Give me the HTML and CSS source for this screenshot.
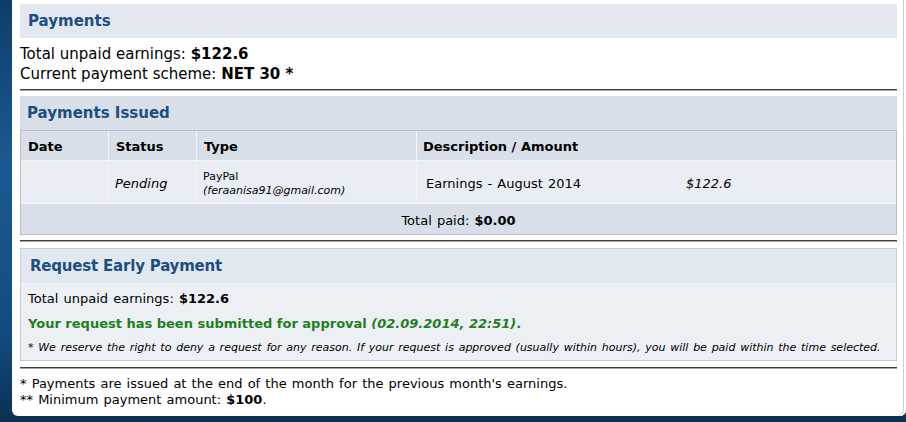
FILE: index.html
```html
<!DOCTYPE html>
<html>
<head>
<meta charset="utf-8">
<title>Payments</title>
<link rel="stylesheet" href="styles.css">
</head>
<body>
<div class="page">
  <h2 class="head">Payments</h2>
  <div class="summary">
    <div>Total unpaid earnings: <b>$122.6</b></div>
    <div>Current payment scheme: <b>NET 30 *</b></div>
  </div>
  <hr class="rule rule-a">

  <section class="issued">
    <h2 class="issued-title">Payments Issued</h2>
    <table class="pay-table">
      <thead>
        <tr>
          <th class="c-date">Date</th>
          <th class="c-status">Status</th>
          <th class="c-type">Type</th>
          <th class="c-desc">Description / Amount</th>
        </tr>
      </thead>
      <tbody>
        <tr class="row">
          <td></td>
          <td><i>Pending</i></td>
          <td class="type-cell">PayPal<br><i>(feraanisa91@gmail.com)</i></td>
          <td class="desc-cell"><span class="desc">Earnings - August 2014</span><i class="amt">$122.6</i></td>
        </tr>
        <tr class="total">
          <td colspan="4">Total paid: <b>$0.00</b></td>
        </tr>
      </tbody>
    </table>
  </section>
  <hr class="rule rule-b">

  <section class="early">
    <h2 class="early-title">Request Early Payment</h2>
    <div class="early-body">
      <p class="e-total">Total unpaid earnings: <b>$122.6</b></p>
      <p class="e-ok">Your request has been submitted for approval <i>(02.09.2014, 22:51)</i>.</p>
      <p class="e-note">* We reserve the right to deny a request for any reason. If your request is approved (usually within hours), you will be paid within the time selected.</p>
    </div>
  </section>
  <hr class="rule rule-c">

  <div class="foot">
    <div>* Payments are issued at the end of the month for the previous month's earnings.</div>
    <div>** Minimum payment amount: <b>$100</b>.</div>
  </div>
</div>
</body>
</html>
```
FILE: styles.css
```css
html, body {
  margin: 0;
  padding: 0;
}
body {
  width: 906px;
  height: 422px;
  overflow: hidden;
  background: linear-gradient(180deg, #0f3d6a 0%, #1a5a92 40%, #124a7e 80%, #0b2f52 100%);
  font-family: "DejaVu Sans", Verdana, sans-serif;
  font-size: 13px;
  word-spacing: 1px;
  color: #000;
}
.page {
  margin-left: 12px;
  width: 877px;
  height: 412px;
  padding: 4px 9px 0 8px;
  background: #fff;
  border-radius: 0 0 6px 6px;
  box-shadow: inset -2px 0 0 #fff, inset -3px 0 0 #c9ced5;
}
.head {
  margin: 0;
  height: 34px;
  line-height: 34px;
  padding-left: 8px;
  background: #e3e8f0;
  color: #1b4f80;
  font-size: 15px;
  font-weight: bold;
  word-spacing: 0;
}
.summary {
  margin-top: 6px;
  line-height: 20px;
  font-size: 15px;
  word-spacing: 0;
}
.rule {
  margin: 0;
  height: 0;
  border: 0;
  border-top: 1px solid #3f3f3f;
  border-bottom: 1px solid #a5a5a5;
}
.rule-a { margin-top: 5px; }
.issued {
  margin-top: 5px;
  background: #d8dfe9;
}
.issued-title {
  margin: 0;
  height: 34px;
  line-height: 34px;
  padding-left: 7px;
  color: #1b4f80;
  font-size: 15px;
  font-weight: bold;
  word-spacing: 0;
}
.pay-table {
  width: 100%;
  table-layout: fixed;
  border-collapse: separate;
  border-spacing: 0;
  border: 1px solid #b3bfcc;
}
.pay-table th,
.pay-table td {
  box-sizing: border-box;
  text-align: left;
  vertical-align: middle;
  border-right: 1px solid #f2f5f8;
  border-bottom: 1px solid #f2f5f8;
}
.pay-table th:last-child,
.pay-table td:last-child {
  border-right: 0;
}
.pay-table th {
  font-weight: bold;
  padding: 8px 7px 5px;
  line-height: 16px;
  word-spacing: 0;
}
.c-date { width: 88px; padding-left: 7px; }
.c-status { width: 88px; }
.c-type { width: 220px; }
.pay-table th.c-desc { padding-left: 6px; }
.row td {
  background: #e9eef4;
  padding: 9px 6px 5px;
  height: 43px;
  line-height: 16px;
}
.type-cell {
  font-size: 11px;
  line-height: 14px !important;
}
.row td.desc-cell {
  padding-left: 9px;
}
.desc {
  display: inline-block;
  width: 260px;
}
.total td {
  background: #d8dfe9;
  text-align: center;
  padding: 9px 0 5px;
  line-height: 16px;
  border-bottom: 0;
}
.rule-b { margin-top: 5px; }
.early {
  margin-top: 6px;
  border: 1px solid #c3cbd5;
  background: #ecf0f5;
}
.early-title {
  margin: 0;
  height: 34px;
  line-height: 34px;
  padding-left: 9px;
  background: #e2e8f0;
  border-bottom: 1px solid #f4f6f9;
  color: #1b4f80;
  font-size: 15px;
  font-weight: bold;
  word-spacing: 0;
  letter-spacing: -0.2px;
}
.early-body {
  padding: 5px 7px 4px;
}
.early-body p {
  margin: 0;
}
.e-total {
  line-height: 20px;
}
.e-ok {
  margin-top: 5px !important;
  line-height: 20px;
  color: #1f7f1f;
  font-weight: bold;
  word-spacing: 0;
}
.e-note {
  margin-top: 6px !important;
  line-height: 16px;
  font-size: 11px;
  font-style: italic;
  word-spacing: 1.25px;
  white-space: nowrap;
}
.rule-c { margin-top: 6px; }
.foot {
  margin-top: 7px;
  line-height: 16px;
}
```
